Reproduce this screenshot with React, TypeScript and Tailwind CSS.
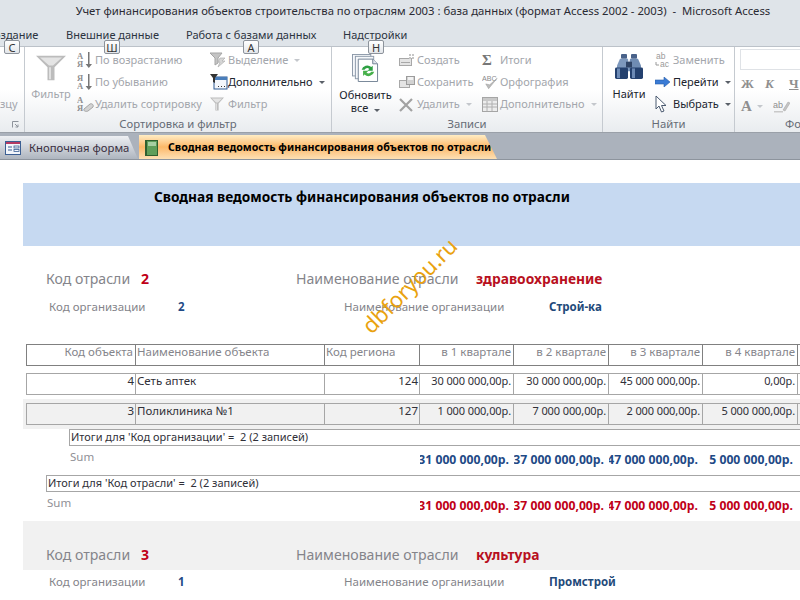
import React from 'react';

const uiFont = { fontFamily: '"Noto Sans", "Open Sans", sans-serif' };

const Caret = ({ dim }: { dim?: boolean }) => (
  <span className={`ml-[6px] inline-block h-0 w-0 border-x-[3px] border-t-[3px] border-x-transparent ${dim ? 'border-t-[#c4c7cc]' : 'border-t-[#5a6068]'}`} />
);

const KeyTip = ({ label, x }: { label: string; x: string }) => (
  <div className={`absolute top-[40px] z-10 flex h-[14px] w-[16px] items-center justify-center rounded-[2px] border border-[#8d939b] bg-gradient-to-b from-white to-[#e3e6ea] text-[11px] leading-none text-[#333] ${x}`}>
    {label}
  </div>
);

const Funnel = ({ w = 16, h = 16 }: { w?: number; h?: number }) => (
  <svg width={w} height={h} viewBox="0 0 30 30" preserveAspectRatio="none">
    <path d="M0 1h30L18.500 14v15h-7V14z" fill="#bcbcbc" />
    <path d="M4 3h22l-9 9h-4z" fill="#e4e4e4" />
    <path d="M13 14h2v14h-2z" fill="#e0e0e0" />
  </svg>
);

const SortIcon = ({ top, bottom }: { top: string; bottom: string }) => (
  <svg width="16" height="18" viewBox="0 0 16 18">
    <text x="0" y="8" fontSize="8.500" fontWeight="700" fontFamily="Liberation Serif, serif" fill="#8f8f8f">{top}</text>
    <text x="0" y="16" fontSize="8.500" fontWeight="700" fontFamily="Liberation Serif, serif" fill="#8f8f8f">{bottom}</text>
    <path d="M11 1h1.500v12H15l-3.200 4-3.200-4H11z" fill="#777" />
  </svg>
);

const ClearSort = () => (
  <svg width="17" height="18" viewBox="0 0 17 18">
    <text x="0" y="8" fontSize="8.500" fontWeight="700" fontFamily="Liberation Serif, serif" fill="#8f8f8f">A</text>
    <text x="0" y="16" fontSize="8.500" fontWeight="700" fontFamily="Liberation Serif, serif" fill="#8f8f8f">Я</text>
    <path d="M7 14l6-5c2-1 4 1 3 3l-5 4c-2 1-5 0-4-2z" fill="#d3d3d3" stroke="#a5a5a5" />
  </svg>
);

const SelectionIcon = () => (
  <svg width="17" height="16" viewBox="0 0 17 16">
    <path d="M0 1h12L8 6v5l-3 2V6z" fill="#c4c4c4" stroke="#a5a5a5" />
    <path d="M10 6h5l-3 3h3l-7 6 2-5H8z" fill="#d6d6d6" stroke="#b0b0b0" strokeWidth=".7" />
  </svg>
);

const AdvancedIcon = () => (
  <svg width="18" height="16" viewBox="0 0 18 16">
    <rect x="4" y="3" width="13" height="12" fill="#f4f7fb" stroke="#2f5b92" />
    <rect x="4" y="3" width="13" height="3" fill="#4a7ebb" />
    <path d="M0 0h8L5 4v5L3 8V4z" fill="#333" />
    <path d="M8 12h1v1H8zm3 0h1v1h-1zm3 0h1v1h-1z" fill="#333" />
  </svg>
);

const NewIcon = () => (
  <svg width="16" height="12" viewBox="0 0 16 12">
    <rect x=".500" y="4.500" width="12" height="7" fill="#e4e4e4" stroke="#a8a8a8" />
    <path d="M2 8h9v1H2z" fill="#a8a8a8" />
    <path d="M10 0h2v2h-2zm3 0h2v2h-2zm0 3h2v2h-2zm-3 0h2v2h-2z" fill="#c6c6c6" />
  </svg>
);

const SaveIcon = () => (
  <svg width="16" height="12" viewBox="0 0 16 12">
    <rect x=".500" y="4.500" width="10" height="7" fill="#e4e4e4" stroke="#a8a8a8" />
    <rect x="7.500" y=".500" width="8" height="8" fill="#d2d2d2" stroke="#9c9c9c" />
    <rect x="9" y="1" width="5" height="3" fill="#f2f2f2" />
  </svg>
);

const DeleteIcon = () => (
  <svg width="15" height="15" viewBox="0 0 15 15">
    <path d="M1 2l12 12M13 2L1 14" stroke="#a2a2a2" strokeWidth="2.200" />
  </svg>
);

const SpellIcon = () => (
  <svg width="19" height="17" viewBox="0 0 19 17">
    <text x="0" y="7" fontSize="7.500" fontFamily="Liberation Sans, sans-serif" fill="#8a8a8a">ABC</text>
    <path d="M4 10l3 5 9-11-8 7z" fill="#bcbcbc" stroke="#a0a0a0" strokeWidth=".6" />
  </svg>
);

const GridIcon = () => (
  <svg width="16" height="15" viewBox="0 0 16 15">
    <rect x=".500" y=".500" width="15" height="14" fill="#ededed" stroke="#a5a5a5" />
    <rect x="1" y="1" width="14" height="3" fill="#c8c8c8" />
    <path d="M1 7h14M1 10h14M5 4v10M10 4v10" stroke="#b0b0b0" />
  </svg>
);

const RefreshIcon = () => (
  <svg width="27" height="28" viewBox="0 0 28 30" preserveAspectRatio="none">
    <rect x=".500" y=".500" width="19" height="23" fill="#f5f7fa" stroke="#8b98a8" />
    <rect x="3.500" y="2.500" width="19" height="24" fill="#f5f7fa" stroke="#8b98a8" />
    <path d="M6.500 5.500h15l5 5v19h-20z" fill="#fff" stroke="#6f7f92" />
    <path d="M21.500 5.500v5h5" fill="#dfe4ea" stroke="#6f7f92" />
    <path d="M10 17a6 6 0 0 1 10-3l1.500-1.500V18H16l2-2a3.500 3.500 0 0 0-5 1z" fill="#2ea043" />
    <path d="M23 19a6 6 0 0 1-10 3l-1.500 1.500V18H17l-2 2a3.500 3.500 0 0 0 5-1z" fill="#46b04a" />
  </svg>
);

const Binoculars = () => (
  <svg width="28" height="26" viewBox="0 0 28 27" preserveAspectRatio="none">
    <rect x="6" y="0" width="6" height="5" rx="1" fill="#49628a" />
    <rect x="16" y="0" width="6" height="5" rx="1" fill="#49628a" />
    <path d="M5 5h8l1 7v6H2V12z" fill="#7d98bd" />
    <path d="M15 5h8l3 7v6H14V12z" fill="#6f8cb3" />
    <rect x="11" y="8" width="6" height="6" fill="#2f4466" />
    <rect x="0" y="14" width="13" height="12" rx="1.500" fill="#24416f" />
    <rect x="15" y="14" width="13" height="12" rx="1.500" fill="#24416f" />
    <rect x="2" y="15" width="3" height="10" fill="#6c8ab5" />
    <rect x="17" y="15" width="3" height="10" fill="#6c8ab5" />
  </svg>
);

const ReplaceIcon = () => (
  <svg width="17" height="17" viewBox="0 0 17 17">
    <text x="1" y="7" fontSize="8.500" fontFamily="Liberation Sans, sans-serif" fill="#9a9a9a">ab</text>
    <text x="5" y="15" fontSize="8.500" fontFamily="Liberation Sans, sans-serif" fill="#9a9a9a">ac</text>
    <path d="M1 10v3h3" stroke="#9a9a9a" fill="none" />
  </svg>
);

const GoIcon = () => (
  <svg width="16" height="10" viewBox="0 0 16 10">
    <path d="M0 3h9V0l6 5-6 5V7H0z" fill="#3a7bd5" stroke="#2a5ea8" strokeWidth=".6" />
  </svg>
);

const CursorIcon = () => (
  <svg width="12" height="18" viewBox="0 0 12 18">
    <path d="M1 1v13l3-3 2.500 6 2.500-1-2.500-5.500H11z" fill="#fff" stroke="#4a5a70" />
  </svg>
);

const HighlightIcon = () => (
  <svg width="17" height="14" viewBox="0 0 17 14">
    <text x="0" y="9" fontSize="9" fontFamily="Liberation Sans, sans-serif" fill="#8f8f8f">ab</text>
    <path d="M10 11l5-8 2 1-5 8z" fill="#c4c4c4" stroke="#a0a0a0" strokeWidth=".5" />
    <path d="M1 12h9v1.500H1z" fill="#c9c9c9" />
  </svg>
);

const FormIcon = () => (
  <svg className="shrink-0" width="16" height="14" viewBox="0 0 16 14">
    <rect x=".500" y=".500" width="15" height="13" fill="#f3f6fb" stroke="#3b5f93" />
    <rect x="1" y="1" width="14" height="2" fill="#b53a63" />
    <path d="M3 6h4M3 9h4" stroke="#3b5f93" />
    <rect x="9" y="5" width="5" height="2" fill="none" stroke="#3b5f93" strokeWidth=".8" />
    <rect x="9" y="8.500" width="5" height="2" fill="none" stroke="#3b5f93" strokeWidth=".8" />
  </svg>
);

const ReportIcon = () => (
  <svg className="shrink-0" width="13" height="16" viewBox="0 0 13 16">
    <rect x=".500" y=".500" width="12" height="15" fill="#5f9e5a" stroke="#2f5f30" />
    <rect x="3" y="2" width="8" height="4" fill="#a7cfa2" />
    <path d="M1 1h1v14H1z" fill="#2f5f30" />
  </svg>
);

type ActionProps = { icon: React.ReactNode; label: string; disabled?: boolean; caret?: boolean; caretDim?: boolean };

const Action = ({ icon, label, disabled, caret, caretDim }: ActionProps) => (
  <div className="flex h-[22px] items-center whitespace-nowrap">
    <span className="flex w-[18px] shrink-0 items-center justify-start">{icon}</span>
    <span className={disabled ? 'text-[#a3a6ac]' : 'text-[#20242e]'}>{label}</span>
    {caret && <Caret dim={caretDim} />}
  </div>
);

const Group = ({ label, width, children }: { label: string; width: string; children: React.ReactNode }) => (
  <div className={`flex shrink-0 flex-col border-r border-[#c5cad0] ${width}`}>
    <div className="flex h-[70px] pt-[2px]">{children}</div>
    <div className="flex h-[15px] items-center justify-center whitespace-nowrap text-[11.300px] text-[#666c76]">{label}</div>
  </div>
);

const cols = 'grid-cols-[109px_189px_95px_94px_95px_94px_95px_1fr]';

const cellAlign = (i: number, head?: boolean) => {
  if (i === 1 || (head && i === 2)) return 'pl-[1px] text-left';
  if (head) return 'pr-[2px] text-right';
  if (i >= 3) return 'pr-[2px] text-right text-[11px] tracking-[-0.1px]';
  return 'pr-[1px] text-right';
};

const TableRow = ({ cells, head, className }: { cells: string[]; head?: boolean; className: string }) => (
  <div className={`grid h-[22px] border-y border-l ${cols} ${head ? 'border-[#808080] text-[#85858b]' : 'border-[#a6a6a6] text-[#303038]'} ${className}`}>
    {cells.map((c, i) => (
      <div
        key={i}
        className={`overflow-hidden whitespace-nowrap border-r leading-[13px] ${head ? 'border-[#808080]' : 'border-[#a6a6a6]'} ${cellAlign(i, head)}`}
      >
        {c}
      </div>
    ))}
    <div />
  </div>
);

const SumRow = ({ values, color, pl }: { values: string[]; color: string; pl: string }) => (
  <div className="ml-[26px] grid h-[29px] grid-cols-[394px_94px_95px_94px_95px_1fr] pt-[2px]">
    <div className={`text-[#909096] ${pl}`}>Sum</div>
    {values.map((v) => (
      <div key={v} className={`flex justify-end overflow-hidden whitespace-nowrap pr-[5px] pt-[3px] text-[12.200px] font-bold ${color}`}>
        {v}
      </div>
    ))}
  </div>
);

const BranchHead = ({ code, name }: { code: string; name: string }) => (
  <div className="flex h-[24px] items-center whitespace-nowrap pl-[23px] text-[14.100px] text-[#84848a]">
    <span className="w-[95px]">Код отрасли</span>
    <span className="w-[155px] font-bold text-[#c00017]">{code}</span>
    <span className="w-[180px]">Наименование отрасли</span>
    <span className="text-[13.800px] font-bold text-[#b80f20]">{name}</span>
  </div>
);

const OrgHead = ({ code, name }: { code: string; name: string }) => (
  <div className="flex h-[22px] items-center whitespace-nowrap pl-[26px] text-[#84848a]">
    <span className="w-[129px]">Код организации</span>
    <span className="w-[166px] font-bold text-[#1f4a86]">{code}</span>
    <span className="w-[205px]">Наименование организации</span>
    <span className="font-bold text-[#1f4a7a]">{name}</span>
  </div>
);

export default function App() {
  const money = ['31 000 000,00р.', '37 000 000,00р.', '47 000 000,00р.', '5 000 000,00р.'];

  return (
    <div className="relative h-screen w-[800px] overflow-hidden bg-white text-[11.500px]" style={uiFont}>
      {/* title bar + ribbon tabs */}
      <div className="h-[46px] bg-[#dfe4e9]">
        <div className="flex h-[22px] items-center justify-center whitespace-nowrap pl-[46px] text-[11.300px] text-[#2a2a33]">
          Учет финансирования объектов строительства по отраслям 2003 : база данных (формат Access 2002 - 2003)&nbsp; -&nbsp; Microsoft Access
        </div>
        <div className="flex h-[24px] items-center whitespace-nowrap pt-[3px] text-[11px] text-[#2b3340]">
          <span className="-ml-[13px] w-[79px]">Создание</span>
          <span className="w-[120px]">Внешние данные</span>
          <span className="w-[157px]">Работа с базами данных</span>
          <span>Надстройки</span>
        </div>
      </div>

      <KeyTip label="С" x="left-[4px]" />
      <KeyTip label="Ш" x="left-[104px]" />
      <KeyTip label="А" x="left-[243px]" />
      <KeyTip label="Н" x="left-[368px]" />

      {/* ribbon */}
      <div className="flex h-[87px] overflow-hidden border-y border-t-[#bcc2c9] border-b-[#9aa0a8] bg-gradient-to-b from-white via-white to-[#e9ecef] text-[11px]">
        <div className="flex w-[25px] shrink-0 flex-col border-r border-[#c5cad0]">
          <div className="h-[70px] pr-[7px] pt-[49px] text-right text-[#a3a6ac]">зцу</div>
          <div className="flex h-[15px] items-center justify-end pr-[5px]">
            <svg width="7" height="7" viewBox="0 0 7 7">
              <path d="M.500 6.500v-6h6M3 3l3 3M6 3.500V6H3.500" fill="none" stroke="#8d939b" />
            </svg>
          </div>
        </div>

        <Group label="Сортировка и фильтр" width="w-[307px]">
          <div className="flex w-[52px] shrink-0 flex-col items-center pt-[6px] text-[#a3a6ac]">
            <Funnel w={30} h={26} />
            <span className="mt-[5px]">Фильтр</span>
          </div>
          <div className="w-[133px] shrink-0">
            <Action icon={<SortIcon top="A" bottom="Я" />} label="По возрастанию" disabled />
            <Action icon={<SortIcon top="Я" bottom="A" />} label="По убыванию" disabled />
            <Action icon={<ClearSort />} label="Удалить сортировку" disabled />
          </div>
          <div>
            <Action icon={<SelectionIcon />} label="Выделение" disabled caret caretDim />
            <Action icon={<AdvancedIcon />} label="Дополнительно" caret />
            <Action icon={<Funnel w={14} h={14} />} label="Фильтр" disabled />
          </div>
        </Group>

        <Group label="Записи" width="w-[271px]">
          <div className="flex w-[67px] shrink-0 flex-col items-center pt-[5px] leading-[13px] text-[#20242e]">
            <RefreshIcon />
            <span className="mt-[6px]">Обновить</span>
            <span>все<Caret /></span>
          </div>
          <div className="w-[83px] shrink-0">
            <Action icon={<NewIcon />} label="Создать" disabled />
            <Action icon={<SaveIcon />} label="Сохранить" disabled />
            <Action icon={<DeleteIcon />} label="Удалить" disabled caret caretDim />
          </div>
          <div>
            <Action icon={<span className="font-['Liberation_Serif'] text-[15px] font-bold leading-none text-[#777]">Σ</span>} label="Итоги" disabled />
            <Action icon={<SpellIcon />} label="Орфография" disabled />
            <Action icon={<GridIcon />} label="Дополнительно" disabled caret caretDim />
          </div>
        </Group>

        <Group label="Найти" width="w-[132px]">
          <div className="flex w-[52px] shrink-0 flex-col items-center pt-[5px] text-[#20242e]">
            <Binoculars />
            <span className="mt-[6px]">Найти</span>
          </div>
          <div>
            <Action icon={<ReplaceIcon />} label="Заменить" disabled />
            <Action icon={<GoIcon />} label="Перейти" caret />
            <Action icon={<CursorIcon />} label="Выбрать" caret />
          </div>
        </Group>

        <div className="flex w-[66px] shrink-0 flex-col overflow-hidden pl-[5px]">
          <div className="flex h-[70px] flex-col pt-[2px]">
            <div className="h-[21px] w-[80px] border border-[#dfe2e6] bg-white" />
            <div className="mt-[3px] flex h-[22px] items-center font-['Liberation_Serif'] text-[13px] font-bold text-[#8f8f8f]">
              <span className="w-[25px] pl-[1px]">Ж</span>
              <span className="w-[24px] italic">К</span>
              <span className="underline">Ч</span>
            </div>
            <div className="flex h-[22px] items-center pl-[1px] text-[#8f8f8f]">
              <span className="font-['Liberation_Serif'] text-[15px] font-bold">A</span>
              <span className="ml-[5px] h-0 w-0 border-x-[3px] border-t-[3px] border-x-transparent border-t-[#c4c7cc]" />
              <span className="ml-[10px] flex"><HighlightIcon /></span>
            </div>
          </div>
          <div className="flex h-[15px] items-center whitespace-nowrap pl-[45px] text-[11.300px] text-[#666c76]">Фо</div>
        </div>
      </div>

      {/* document tabs */}
      <div className="flex h-[27px] items-end gap-[1px] border-b border-[#8d949d] bg-[#abb2bc]">
        <div className="flex h-[23px] w-[138px] items-center bg-gradient-to-b from-[#eef0f3] to-[#aeb5bf] pl-[5px] pt-[1px] text-[11.300px] text-[#3a2f3f] [clip-path:polygon(0_0,128px_0,100%_100%,0_100%)]">
          <FormIcon />
          <span className="ml-[8px] whitespace-nowrap">Кнопочная форма</span>
        </div>
        <div className="flex h-[24px] w-[358px] items-center bg-gradient-to-b from-[#ffedc4] via-[#fbb868] to-[#fde0b4] pl-[6px] pt-[1px] text-[10.650px] font-bold text-black [clip-path:polygon(0_0,346px_0,100%_100%,0_100%)]">
          <ReportIcon />
          <span className="ml-[10px] whitespace-nowrap">Сводная ведомость финансирования объектов по отрасли</span>
        </div>
      </div>

      {/* report */}
      <div className="relative">
        <div className="ml-[23px] mt-[23px] h-[63px] whitespace-nowrap bg-[#c6d9f1] pl-[131px] pt-[4px] text-[13.700px] font-bold leading-[20px] text-black">
          Сводная ведомость финансирования объектов по отрасли
        </div>

        <div className="ml-[23px] mt-[21px]">
          <BranchHead code="2" name="здравоохранение" />
          <div className="mt-[5px]">
            <OrgHead code="2" name="Строй-ка" />
          </div>
        </div>

        <TableRow
          head
          className="ml-[26px] mt-[26px]"
          cells={['Код объекта', 'Наименование объекта', 'Код региона', 'в 1 квартале', 'в 2 квартале', 'в 3 квартале', 'в 4 квартале']}
        />
        <TableRow
          className="ml-[26px] mt-[7px]"
          cells={['4', 'Сеть аптек', '124', '30 000 000,00р.', '30 000 000,00р.', '45 000 000,00р.', '0,00р.']}
        />
        <div className="ml-[23px] mt-[4px] bg-[#f1f1f1] py-[4px]">
          <TableRow
            className="ml-[3px]"
            cells={['3', 'Поликлиника №1', '127', '1 000 000,00р.', '7 000 000,00р.', '2 000 000,00р.', '5 000 000,00р.']}
          />
        </div>

        <div className="ml-[69px] h-[17px] border-y border-l border-[#a6a6a6] pl-[1px] text-[11px] leading-[14px] text-[#303038]">
          Итоги для 'Код организации' =&nbsp; 2 (2 записей)
        </div>
        <SumRow values={money} color="text-[#1f4a86]" pl="pl-[44px]" />
        <div className="ml-[46px] h-[17px] border-y border-l border-[#a6a6a6] pl-[1px] text-[11px] leading-[14px] text-[#303038]">
          Итоги для 'Код отрасли' =&nbsp; 2 (2 записей)
        </div>
        <SumRow values={money} color="text-[#c00017]" pl="pl-[21px]" />

        <div className="ml-[23px] h-[49px] bg-[#f1f1f1] pt-[22px]">
          <BranchHead code="3" name="культура" />
        </div>
        <div className="ml-[23px] mt-[1px]">
          <OrgHead code="1" name="Промстрой" />
        </div>

        {/* watermark sits on top of the report */}
        <div className="absolute left-[347px] top-[91px] -rotate-45 whitespace-nowrap text-[22px] leading-none text-[#e9a20f]">
          dbforyou.ru
        </div>
      </div>
    </div>
  );
}
